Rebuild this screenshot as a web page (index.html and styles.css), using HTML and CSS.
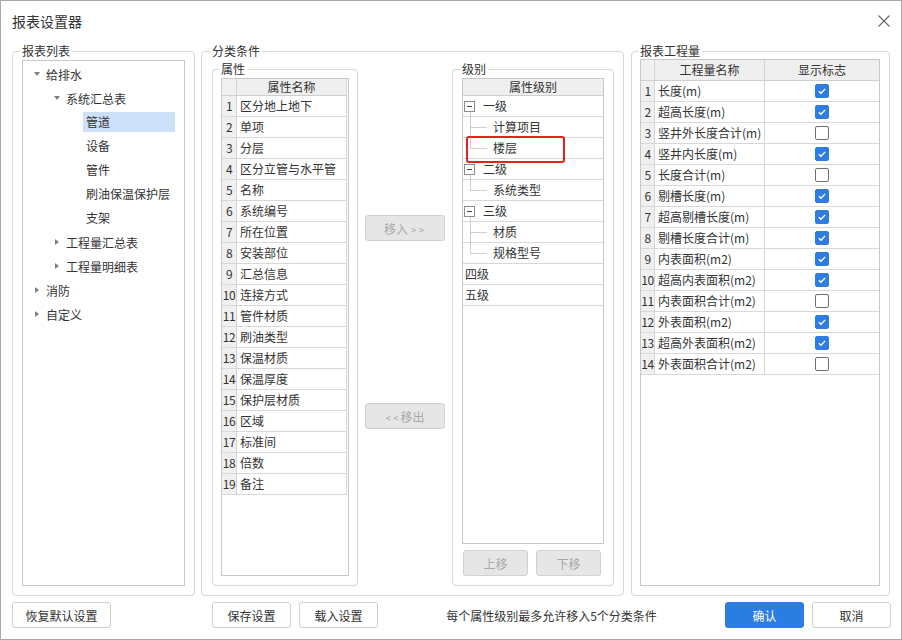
FILE: index.html
```html
<!DOCTYPE html>
<html lang="zh-CN">
<head>
  <meta charset="UTF-8">
  <title>报表设置器</title>
  <link rel="stylesheet" href="styles.css">
</head>
<body>
  <div class="dialog">
    <div class="titlebar">
      <span class="title">报表设置器</span>
      <span class="close">
        <svg width="12" height="12" viewBox="0 0 12 12"><path d="M0.5 0.5L11.5 11.5M11.5 0.5L0.5 11.5" stroke="#666" stroke-width="1.1" fill="none"/></svg>
      </span>
    </div>

    <div class="main">
      <!-- 报表列表 -->
      <div class="group group-list">
        <div class="group-title">报表列表</div>
        <div class="tree">
          <div class="node lv0"><i class="arrow down"></i>给排水</div>
          <div class="node lv1"><i class="arrow down"></i>系统汇总表</div>
          <div class="node lv2"><span class="label selected">管道</span></div>
          <div class="node lv2"><span class="label">设备</span></div>
          <div class="node lv2"><span class="label">管件</span></div>
          <div class="node lv2"><span class="label">刷油保温保护层</span></div>
          <div class="node lv2"><span class="label">支架</span></div>
          <div class="node lv1"><i class="arrow right"></i>工程量汇总表</div>
          <div class="node lv1"><i class="arrow right"></i>工程量明细表</div>
          <div class="node lv0"><i class="arrow right"></i>消防</div>
          <div class="node lv0"><i class="arrow right"></i>自定义</div>
        </div>
      </div>

      <!-- 分类条件 -->
      <div class="group group-cond">
        <div class="group-title">分类条件</div>
        <div class="cond-row">
          <div class="group sub-attr">
            <div class="group-title">属性</div>
            <div class="grid attr-grid">
              <div class="row head"><span class="num"></span><span class="name center">属性名称</span></div>
              <div class="row"><span class="num">1</span><span class="name">区分地上地下</span></div>
              <div class="row"><span class="num">2</span><span class="name">单项</span></div>
              <div class="row"><span class="num">3</span><span class="name">分层</span></div>
              <div class="row"><span class="num">4</span><span class="name">区分立管与水平管</span></div>
              <div class="row"><span class="num">5</span><span class="name">名称</span></div>
              <div class="row"><span class="num">6</span><span class="name">系统编号</span></div>
              <div class="row"><span class="num">7</span><span class="name">所在位置</span></div>
              <div class="row"><span class="num">8</span><span class="name">安装部位</span></div>
              <div class="row"><span class="num">9</span><span class="name">汇总信息</span></div>
              <div class="row"><span class="num">10</span><span class="name">连接方式</span></div>
              <div class="row"><span class="num">11</span><span class="name">管件材质</span></div>
              <div class="row"><span class="num">12</span><span class="name">刷油类型</span></div>
              <div class="row"><span class="num">13</span><span class="name">保温材质</span></div>
              <div class="row"><span class="num">14</span><span class="name">保温厚度</span></div>
              <div class="row"><span class="num">15</span><span class="name">保护层材质</span></div>
              <div class="row"><span class="num">16</span><span class="name">区域</span></div>
              <div class="row"><span class="num">17</span><span class="name">标准间</span></div>
              <div class="row"><span class="num">18</span><span class="name">倍数</span></div>
              <div class="row"><span class="num">19</span><span class="name">备注</span></div>
            </div>
          </div>

          <div class="move-col">
            <button class="btn disabled move-in">移入<span class="arrows">&gt;&gt;</span></button>
            <button class="btn disabled move-out"><span class="arrows">&lt;&lt;</span>移出</button>
          </div>

          <div class="group sub-level">
            <div class="group-title">级别</div>
            <div class="level-list">
              <div class="lrow head">属性级别</div>
              <div class="lrow parent"><span class="toggle"></span>一级</div>
              <div class="lrow child">计算项目</div>
              <div class="lrow child last">楼层</div>
              <div class="lrow parent"><span class="toggle"></span>二级</div>
              <div class="lrow child last">系统类型</div>
              <div class="lrow parent"><span class="toggle"></span>三级</div>
              <div class="lrow child">材质</div>
              <div class="lrow child last">规格型号</div>
              <div class="lrow plain">四级</div>
              <div class="lrow plain">五级</div>
              <div class="mark"></div>
            </div>
            <div class="level-btns">
              <button class="btn disabled">上移</button>
              <button class="btn disabled">下移</button>
            </div>
          </div>
        </div>
      </div>

      <!-- 报表工程量 -->
      <div class="group group-qty">
        <div class="group-title">报表工程量</div>
        <div class="grid qty-grid">
          <div class="row head"><span class="num"></span><span class="name center">工程量名称</span><span class="flag">显示标志</span></div>
          <div class="row"><span class="num">1</span><span class="name">长度(m)</span><span class="flag"><span class="cb on"><svg viewBox="0 0 14 14"><path d="M3.3 7.3l2.5 2.4 4.9-5.2" stroke="#fff" stroke-width="1.6" fill="none"/></svg></span></span></div>
          <div class="row"><span class="num">2</span><span class="name">超高长度(m)</span><span class="flag"><span class="cb on"><svg viewBox="0 0 14 14"><path d="M3.3 7.3l2.5 2.4 4.9-5.2" stroke="#fff" stroke-width="1.6" fill="none"/></svg></span></span></div>
          <div class="row"><span class="num">3</span><span class="name">竖井外长度合计(m)</span><span class="flag"><span class="cb"></span></span></div>
          <div class="row"><span class="num">4</span><span class="name">竖井内长度(m)</span><span class="flag"><span class="cb on"><svg viewBox="0 0 14 14"><path d="M3.3 7.3l2.5 2.4 4.9-5.2" stroke="#fff" stroke-width="1.6" fill="none"/></svg></span></span></div>
          <div class="row"><span class="num">5</span><span class="name">长度合计(m)</span><span class="flag"><span class="cb"></span></span></div>
          <div class="row"><span class="num">6</span><span class="name">剔槽长度(m)</span><span class="flag"><span class="cb on"><svg viewBox="0 0 14 14"><path d="M3.3 7.3l2.5 2.4 4.9-5.2" stroke="#fff" stroke-width="1.6" fill="none"/></svg></span></span></div>
          <div class="row"><span class="num">7</span><span class="name">超高剔槽长度(m)</span><span class="flag"><span class="cb on"><svg viewBox="0 0 14 14"><path d="M3.3 7.3l2.5 2.4 4.9-5.2" stroke="#fff" stroke-width="1.6" fill="none"/></svg></span></span></div>
          <div class="row"><span class="num">8</span><span class="name">剔槽长度合计(m)</span><span class="flag"><span class="cb on"><svg viewBox="0 0 14 14"><path d="M3.3 7.3l2.5 2.4 4.9-5.2" stroke="#fff" stroke-width="1.6" fill="none"/></svg></span></span></div>
          <div class="row"><span class="num">9</span><span class="name">内表面积(m2)</span><span class="flag"><span class="cb on"><svg viewBox="0 0 14 14"><path d="M3.3 7.3l2.5 2.4 4.9-5.2" stroke="#fff" stroke-width="1.6" fill="none"/></svg></span></span></div>
          <div class="row"><span class="num">10</span><span class="name">超高内表面积(m2)</span><span class="flag"><span class="cb on"><svg viewBox="0 0 14 14"><path d="M3.3 7.3l2.5 2.4 4.9-5.2" stroke="#fff" stroke-width="1.6" fill="none"/></svg></span></span></div>
          <div class="row"><span class="num">11</span><span class="name">内表面积合计(m2)</span><span class="flag"><span class="cb"></span></span></div>
          <div class="row"><span class="num">12</span><span class="name">外表面积(m2)</span><span class="flag"><span class="cb on"><svg viewBox="0 0 14 14"><path d="M3.3 7.3l2.5 2.4 4.9-5.2" stroke="#fff" stroke-width="1.6" fill="none"/></svg></span></span></div>
          <div class="row"><span class="num">13</span><span class="name">超高外表面积(m2)</span><span class="flag"><span class="cb on"><svg viewBox="0 0 14 14"><path d="M3.3 7.3l2.5 2.4 4.9-5.2" stroke="#fff" stroke-width="1.6" fill="none"/></svg></span></span></div>
          <div class="row"><span class="num">14</span><span class="name">外表面积合计(m2)</span><span class="flag"><span class="cb"></span></span></div>
        </div>
      </div>
    </div>

    <div class="footer">
      <button class="btn reset">恢复默认设置</button>
      <button class="btn save">保存设置</button>
      <button class="btn load">载入设置</button>
      <span class="note">每个属性级别最多允许移入5个分类条件</span>
      <button class="btn primary">确认</button>
      <button class="btn cancel">取消</button>
    </div>
  </div>
</body>
</html>
```

FILE: styles.css
```css
* {
  box-sizing: border-box;
}

body {
  margin: 0;
  font-family: "Noto Sans CJK SC", "Noto Sans", sans-serif;
  font-size: 12px;
  color: #333;
  background: #fff;
}

.dialog {
  width: 902px;
  height: 640px;
  border: 1px solid #a9a9a9;
  background: #fff;
}

.titlebar {
  height: 39px;
  display: flex;
  align-items: center;
  justify-content: space-between;
  padding: 0 11px;
}

.title {
  font-size: 14px;
}

.close svg {
  display: block;
}

.main {
  display: flex;
  height: 545px;
  margin-top: 11px;
  padding: 0 11px;
}

/* group boxes */
.group {
  display: flex;
  flex-direction: column;
  border: 1px solid #d6d6d6;
  border-radius: 4px;
}

.group-title {
  align-self: flex-start;
  margin: -8px 0 0 -2px;
  padding: 0 2px;
  line-height: 14px;
  background: #fff;
}

.group-list {
  width: 183px;
  padding: 0 9px 9px;
}

.group-cond {
  width: 423px;
  margin-left: 6px;
  padding: 0 9px 9px 10px;
}

.group-qty {
  width: 259px;
  margin-left: 7px;
  padding: 0 9px 9px 8px;
}

/* left tree */
.tree {
  flex: 1;
  margin-top: 2px;
  padding-top: 1px;
  border: 1px solid #c8c8c8;
}

.node {
  display: flex;
  align-items: center;
  height: 24px;
}

.lv0 { padding-left: 11px; }
.lv1 { padding-left: 31px; }
.lv2 { padding-left: 60px; }

.arrow {
  display: flex;
  align-items: center;
  width: 12px;
  height: 12px;
}

.arrow.down::before {
  content: "";
  border-left: 3px solid transparent;
  border-right: 3px solid transparent;
  border-top: 4px solid #808080;
}

.arrow.right::before {
  content: "";
  margin-left: 1px;
  border-top: 3px solid transparent;
  border-bottom: 3px solid transparent;
  border-left: 4px solid #808080;
}

.label {
  padding: 0 3px;
  line-height: 20px;
}

.label.selected {
  width: 92px;
  background: #cce0f7;
}

/* 分类条件 */
.cond-row {
  display: flex;
  flex: 1;
  margin-top: 11px;
}

.sub-attr {
  width: 146px;
  padding: 0 8px 9px 8px;
}

.sub-level {
  width: 162px;
  padding: 0 9px 9px 9px;
}

.grid {
  flex: 1;
  border: 1px solid #c8c8c8;
}

.attr-grid {
  margin-top: 2px;
}

.qty-grid {
  margin-top: 1px;
}

.row {
  display: flex;
  height: 21px;
  line-height: 20px;
  border-bottom: 1px solid #d8d8d8;
}

.attr-grid .row {
  margin-right: 1px;
  border-right: 1px solid #d4d4d4;
}

.attr-grid .row.head {
  height: 17px;
  line-height: 16px;
}

.row.head {
  background: #efefef;
  border-bottom-color: #cfcfcf;
}

.num {
  flex: none;
  width: 15px;
  text-align: center;
  background: #f0f0f0;
  border-right: 1px solid #d4d4d4;
  letter-spacing: -0.5px;
}

.qty-grid .num {
  width: 14px;
}

.name {
  flex: 1;
  padding-left: 3px;
  white-space: nowrap;
}

.name.center {
  padding-left: 0;
  text-align: center;
}

.qty-grid .name {
  flex: none;
  width: 110px;
  border-right: 1px solid #d4d4d4;
}

.flag {
  flex: 1;
  display: flex;
  align-items: center;
  justify-content: center;
}

.cb {
  width: 14px;
  height: 14px;
  border: 1px solid #707070;
  border-radius: 2px;
  background: #fff;
}

.cb.on {
  border-color: #2f7de1;
  background: #2f7de1;
}

.cb svg {
  display: block;
  width: 12px;
  height: 12px;
}

/* move buttons */
.btn {
  height: 26px;
  padding: 0;
  font: inherit;
  color: #333;
  background: #fff;
  border: 1px solid #cfcfcf;
  border-radius: 3px;
}

.btn.disabled {
  color: #a8a8a8;
  background: #e6e6e6;
  border-color: #d2d2d2;
}

.move-col {
  flex: 1;
  display: flex;
  flex-direction: column;
  align-items: center;
}

.move-col .btn {
  width: 80px;
}

.move-in {
  margin-top: 146px;
}

.move-out {
  margin-top: 162px;
}

.arrows {
  font-size: 10px;
  letter-spacing: 2px;
}

.move-in .arrows {
  margin-left: 3px;
}

/* 级别 */
.level-list {
  position: relative;
  flex: 1;
  margin-top: 2px;
  border: 1px solid #c8c8c8;
}

.lrow {
  position: relative;
  height: 21px;
  line-height: 20px;
  border-bottom: 1px solid #d8d8d8;
}

.lrow.head {
  height: 17px;
  line-height: 16px;
  text-align: center;
  background: #efefef;
  border-bottom-color: #cfcfcf;
}

.lrow.parent {
  display: flex;
  align-items: center;
  padding-left: 1px;
}

.lrow.parent::after {
  content: "";
  position: absolute;
  left: 7px;
  top: 16px;
  bottom: -1px;
  border-left: 1px solid #cfcfcf;
}

.toggle {
  position: relative;
  width: 11px;
  height: 11px;
  margin-right: 8px;
  border: 1px solid #8c8c8c;
  background: #fff;
}

.toggle::before {
  content: "";
  position: absolute;
  left: 2px;
  top: 4px;
  width: 5px;
  border-top: 1px solid #444;
}

.lrow.child {
  padding-left: 30px;
}

.lrow.child::before {
  content: "";
  position: absolute;
  left: 7px;
  top: 0;
  bottom: -1px;
  border-left: 1px solid #cfcfcf;
}

.lrow.child.last::before {
  bottom: 10px;
}

.lrow.child::after {
  content: "";
  position: absolute;
  left: 7px;
  top: 10px;
  width: 17px;
  border-top: 1px solid #cfcfcf;
}

.lrow.plain {
  padding-left: 2px;
}

.mark {
  position: absolute;
  left: 3px;
  top: 57px;
  width: 99px;
  height: 27px;
  border: 2px solid #e5231d;
  border-radius: 3px;
}

.level-btns {
  display: flex;
  gap: 8px;
  margin-top: 6px;
  padding-left: 1px;
}

.level-btns .btn {
  width: 65px;
}

/* footer */
.footer {
  display: flex;
  align-items: center;
  height: 26px;
  margin-top: 6px;
  padding: 0 10px 0 11px;
}

.footer .btn {
  width: 79px;
}

.footer .reset {
  width: 99px;
}

.footer .save {
  margin-left: 101px;
}

.footer .load {
  margin-left: 8px;
}

.note {
  flex: 1;
  text-align: center;
}

.footer .primary {
  color: #fff;
  background: #2b7de2;
  border-color: #2b7de2;
}

.footer .cancel {
  margin-left: 8px;
}
```
